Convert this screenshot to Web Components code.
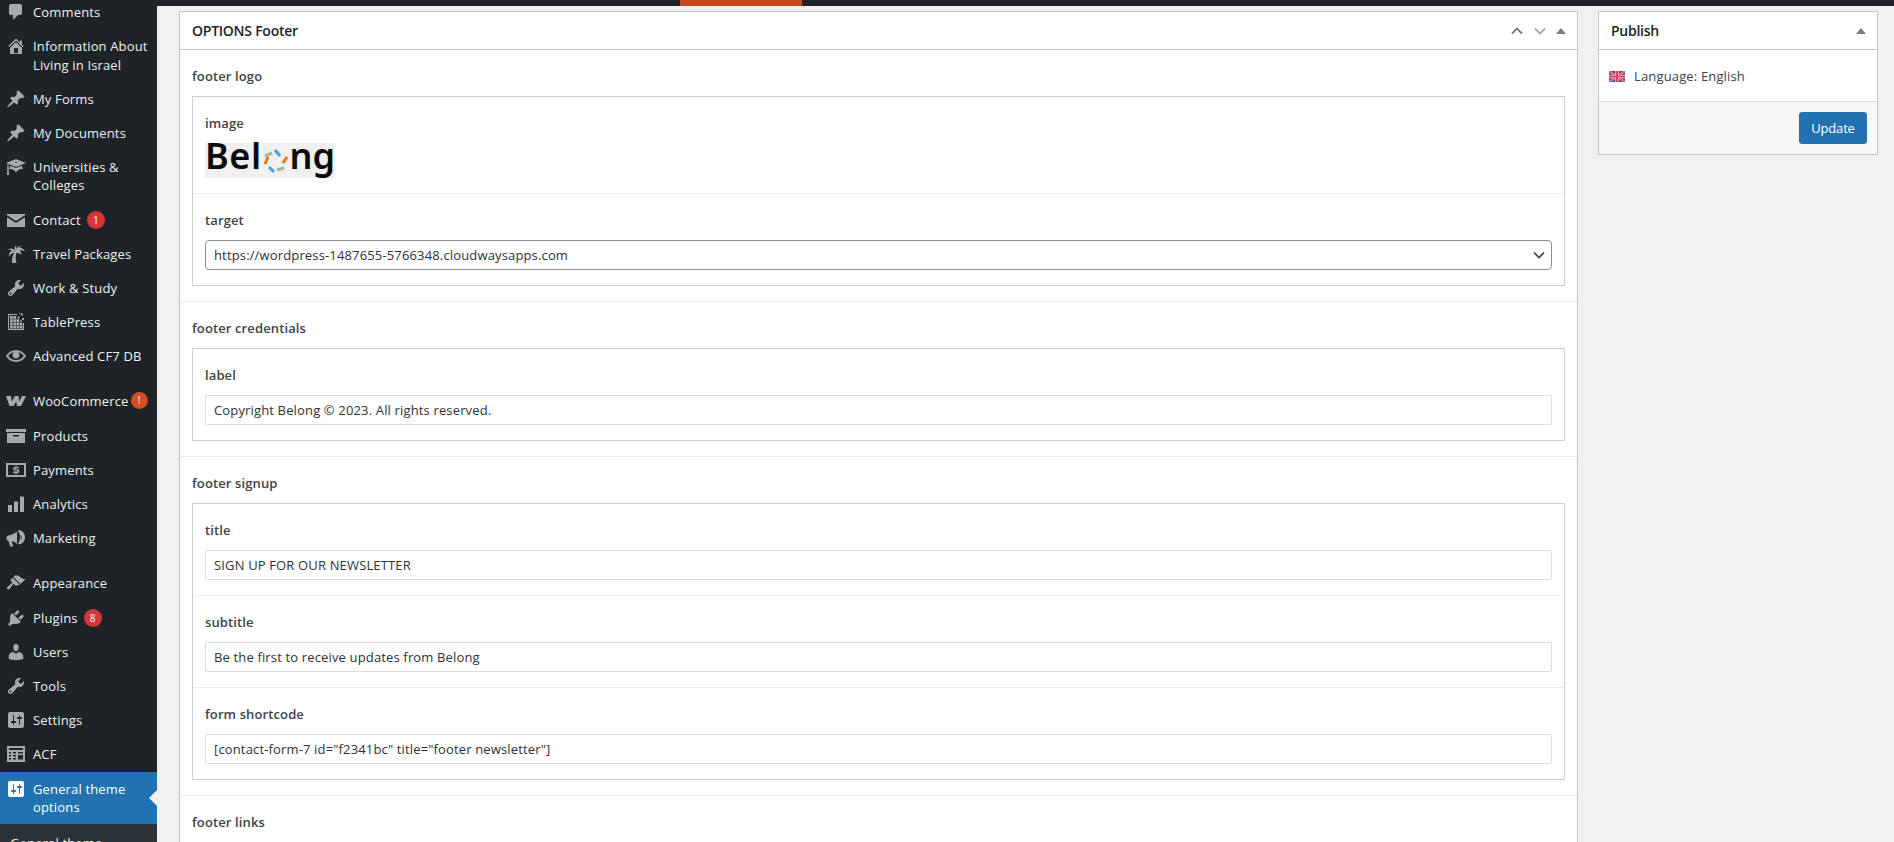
<!DOCTYPE html>
<html lang="en">
<head>
<meta charset="utf-8">
<title>OPTIONS Footer</title>
<style>
html, body { margin: 0; height: 842px; overflow: hidden; background: #f0f0f1; }
body { font: 13px/19px "Open Sans", "Noto Sans", sans-serif; letter-spacing: .15px; color: #3c434a; }
</style>
</head>
<body>
<wp-page>
	<wp-sidebar slot="side">
		<wp-item icon="comment">Comments</wp-item>
		<wp-item icon="home">Information About Living in Israel</wp-item>
		<wp-item icon="pin">My Forms</wp-item>
		<wp-item icon="pin">My Documents</wp-item>
		<wp-item icon="learn" two>Universities &amp; Colleges</wp-item>
		<wp-item icon="mail" badge="1">Contact</wp-item>
		<wp-item icon="palm">Travel Packages</wp-item>
		<wp-item icon="wrench">Work &amp; Study</wp-item>
		<wp-item icon="press">TablePress</wp-item>
		<wp-item icon="eye">Advanced CF7 DB</wp-item>
		<wp-item icon="woo" badge="!" tone="warn" sep>WooCommerce</wp-item>
		<wp-item icon="box">Products</wp-item>
		<wp-item icon="pay">Payments</wp-item>
		<wp-item icon="bars">Analytics</wp-item>
		<wp-item icon="horn">Marketing</wp-item>
		<wp-item icon="brush" sep>Appearance</wp-item>
		<wp-item icon="plug" badge="8">Plugins</wp-item>
		<wp-item icon="user">Users</wp-item>
		<wp-item icon="wrench">Tools</wp-item>
		<wp-item icon="sliders">Settings</wp-item>
		<wp-item icon="acf">ACF</wp-item>
		<wp-item icon="sliders" current two>General theme options</wp-item>
		<wp-subitem>General theme options</wp-subitem>
	</wp-sidebar>

	<wp-postbox slot="main" heading="OPTIONS Footer" arrows>
		<acf-section label="footer logo">
			<acf-row label="image"><belong-logo></belong-logo></acf-row>
			<acf-row label="target"><acf-input select>https://wordpress-1487655-5766348.cloudwaysapps.com</acf-input></acf-row>
		</acf-section>
		<acf-section label="footer credentials">
			<acf-row label="label"><acf-input>Copyright Belong © 2023. All rights reserved.</acf-input></acf-row>
		</acf-section>
		<acf-section label="footer signup">
			<acf-row label="title"><acf-input>SIGN UP FOR OUR NEWSLETTER</acf-input></acf-row>
			<acf-row label="subtitle"><acf-input>Be the first to receive updates from Belong</acf-input></acf-row>
			<acf-row label="form shortcode"><acf-input>[contact-form-7 id="f2341bc" title="footer newsletter"]</acf-input></acf-row>
		</acf-section>
		<acf-section label="footer links"></acf-section>
	</wp-postbox>

	<wp-postbox slot="aside" heading="Publish">
		<publish-body></publish-body>
	</wp-postbox>
</wp-page>

<script>
const ICONS = {
	comment: '<path d="M5 2h9c1.1 0 2 .9 2 2v7c0 1.1-.9 2-2 2h-2l-5 5v-5H5c-1.1 0-2-.9-2-2V4c0-1.1.9-2 2-2z"/>',
	home: '<path d="M16 8.5l1.53 1.53-1.06 1.06L10 4.62l-6.47 6.47-1.06-1.06L10 2.5l4 4v-2h2v4zm-6-2.46l6 5.99V18H4v-6l6-5.96zM12 17v-5H8v5h4z"/>',
	pin: '<path d="M10.44 3.02l1.82-1.82 6.36 6.35-1.83 1.82c-1.05-.68-2.48-.57-3.41.36l-.75.75c-.92.93-1.04 2.35-.35 3.41l-1.83 1.82-2.41-2.41-2.8 2.79c-.42.42-3.38 2.71-3.8 2.29s1.86-3.39 2.28-3.81l2.79-2.79L4.1 9.36l1.83-1.82c1.05.69 2.48.57 3.4-.36l.75-.75c.93-.92 1.05-2.35.36-3.41z"/>',
	learn: '<path d="M10 10L2.54 7.02 3 18H1l.48-11.41L0 6l10-4 10 4zm0-5c-.55 0-1 .22-1 .5s.45.5 1 .5 1-.22 1-.5-.45-.5-1-.5zm0 6l5.57-2.23c.71.94 1.2 2.07 1.36 3.3-.3-.04-.61-.07-.93-.07-2.55 0-4.78 1.37-6 3.41C8.78 13.37 6.55 12 4 12c-.32 0-.63.03-.93.07.16-1.23.65-2.36 1.36-3.3z"/>',
	mail: '<path d="M1 4h18v1.200L10 11 1 5.200z"/><path d="M1 7.200l9 5.800 9-5.800V17H1z"/>',
	palm: '<path d="M8.500 8h2.500C9.500 11 9.300 15 10.500 19H6C5.800 15 6.700 11 8.500 8z"/><path d="M9.500 8.500C8.500 4.500 4.500 3 1.500 6c2-.5 3.500 0 4.500.7C4 7.500 2.500 9.500 3 12.500 4.500 10 7 8.700 9.500 8.500z"/><path d="M9.500 8.500c-.5-3 2.500-7 7-6.500-1.500.3-2.500 1-3 2 2.500-.5 4.500.7 5.500 3.500-2-1.300-4-1.700-5.500-1 1.300 1 2 2.500 1.700 4.500-1.200-1.800-3.200-2.700-5.700-2.500z"/><path d="M9.500 8.500C8 6 8 3.500 10 1.500c.5 2.500 1 4.500-.5 7z"/>',
	wrench: '<path d="M16.68 9.770c-1.340 1.340-3.300 1.670-4.950.99l-5.410 6.520c-.99.99-2.590.99-3.580 0s-.99-2.590 0-3.570l6.520-5.420c-.68-1.650-.35-3.610.99-4.950 1.280-1.280 3.120-1.620 4.720-1.060l-2.890 2.890 2.820 2.820 2.860-2.870c.53 1.580.18 3.390-1.080 4.650zM3.810 16.210c.4.39 1.040.39 1.430 0 .4-.4.4-1.040 0-1.430-.39-.4-1.030-.4-1.430 0-.39.39-.39 1.030 0 1.430z"/>',
	press: '<path d="M2 2h9v1H3v14h14v-6h1v7H2z"/><path d="M4 4h2.800v2.800H4zM7.300 4h2.800v2.800H7.300zM4 7.300h2.800v2.800H4zM7.300 7.300h2.800v2.800H7.300zM10.600 7.300h2.800v2.800h-2.800zM4 10.600h2.800v2.800H4zM7.300 10.600h2.800v2.800H7.300zM10.600 10.600h2.800v2.800h-2.800zM13.900 10.600h2.600v2.800h-2.600zM4 13.900h2.800v2.600H4zM7.300 13.900h2.800v2.600H7.300zM10.600 13.900h2.800v2.600h-2.800zM13.900 13.900h2.600v2.600h-2.600zM11.500 4.500h2v2h-2zM15 1.500h2v2h-2zM13 1h1.200v1.200H13zM16 6h2v2h-2zM14.500 8h1.500v1.500h-1.500z"/>',
	eye: '<path d="M19.700 9.400C17.700 6 14 3.900 10 3.900S2.300 6 .3 9.400L0 10l.3.6c2 3.400 5.700 5.500 9.700 5.500s7.700-2.100 9.700-5.500l.3-.6-.3-.6zM10 14.100c-3.100 0-6-1.600-7.700-4.100C3.600 8 5.700 6.600 8 6.100c-.9.6-1.500 1.700-1.500 2.900 0 1.900 1.600 3.500 3.500 3.500s3.500-1.600 3.500-3.500c0-1.200-.6-2.300-1.500-2.900 2.300.5 4.400 1.900 5.700 3.900-1.700 2.500-4.600 4.100-7.700 4.100z"/>',
	woo: '<path d="M0 5h5l.8 5.500L9 5h3.500l.7 5.500L16 5h4l-5 10h-4l-.8-4.500L7.500 15H3.500z"/>',
	box: '<path d="M0 3h20v3H0z"/><path fill-rule="evenodd" d="M1 7h18v10H1zm6 2v1.500h6V9z"/>',
	pay: '<path fill-rule="evenodd" d="M0 3h20v14H0zm2 2v10h16V5z"/><path d="M12.800 6.800H9c-1 0-1.700.7-1.700 1.700v.5c0 1 .7 1.600 1.700 1.600h2.200v1H7.300v1.600h2v1.100h1.500v-1.100h.8c1 0 1.700-.7 1.700-1.700v-.6c0-1-.7-1.600-1.700-1.600H9.400v-1h3.400zM9.300 5.800h1.500v1.400H9.300z"/>',
	bars: '<path d="M2 11h4v7H2zM8 7.500h4V18H8zM14 2.500h4V18h-4z"/>',
	horn: '<path d="M11 3.500C7.500 6 5 7.200 2.500 7.500 1 7.800.5 9 .5 10.300s.7 2.400 2 2.700l1.800 5.500h3L5.600 13.300c2 .3 3.600 1 5.400 2.700z"/><path fill-rule="evenodd" d="M13 2.200c3.300 0 6 3.100 6 7s-2.700 7-6 7c-.5 0-1-.1-1.400-.2C13 14.300 14 12 14 9.200s-1-5.100-2.400-6.800c.4-.1.900-.2 1.400-.2zm1.500 4.600c.7.500 1.100 1.400 1.100 2.400s-.4 1.900-1.100 2.400c.4-1.500.4-3.300 0-4.800z"/>',
	brush: '<path d="M14.480 11.060L7.410 3.990l1.500-1.500c.5-.56 2.300-.47 3.510.32 1.210.8 1.430 1.280 2.910 2.100 1.180.64 2.450 1.260 4.450.85zm-.71.71L6.700 4.700 4.930 6.470c-.39.39-.39 1.020 0 1.410l1.060 1.060c.39.39.39 1.030 0 1.420-.6.6-1.430 1.110-2.210 1.690-.35.26-.7.53-1.010.84C1.430 13.230.4 14.960 1.400 15.960c.99 1 2.730-.04 3.070-1.330.31-.31.58-.66.84-1.010.58-.78 1.090-1.610 1.690-2.210.39-.39 1.020-.39 1.410 0l1.060 1.060c.39.39 1.020.39 1.410 0z"/>',
	plug: '<path d="M13.110 4.360L9.870 7.600 8 5.730l3.240-3.240c.35-.34 1.050-.2 1.560.32.52.51.66 1.210.31 1.550zm-8 1.770l.91-1.120 9.010 9.010-1.190.84c-.71.71-2.630 1.160-3.820 1.160H6.140L4.900 17.260c-.59.59-1.540.59-2.120 0-.59-.58-.59-1.530 0-2.120l1.240-1.240v-3.880c0-1.130.4-3.190 1.090-3.890zm7.260 3.970l3.240-3.240c.34-.35 1.040-.21 1.550.31.52.51.66 1.210.31 1.550l-3.240 3.250z"/>',
	user: '<path d="M10 9.250c-2.270 0-2.730-3.440-2.730-3.440C7 4.020 7.820 2 9.970 2c2.160 0 2.980 2.020 2.710 3.810 0 0-.41 3.440-2.680 3.440zm0 2.570L12.720 10c2.390 0 4.520 2.330 4.520 4.530v2.490s-3.650 1.130-7.240 1.130c-3.650 0-7.240-1.130-7.240-1.130v-2.490c0-2.250 1.940-4.480 4.470-4.480z"/>',
	sliders: '<path d="M18 16V4c0-1.100-.9-2-2-2H4c-1.100 0-2 .9-2 2v12c0 1.100.9 2 2 2h12c1.100 0 2-.9 2-2zM8 11h1c.55 0 1 .45 1 1s-.45 1-1 1H8v1.500c0 .28-.22.5-.5.5s-.5-.22-.5-.5V13H6c-.55 0-1-.45-1-1s.45-1 1-1h1V5.500c0-.28.22-.5.5-.5s.5.22.5.5V11zm5-2h-1c-.55 0-1-.45-1-1s.45-1 1-1h1V5.500c0-.28.22-.5.5-.5s.5.22.5.5V7h1c.55 0 1 .45 1 1s-.45 1-1 1h-1v5.500c0 .28-.22.5-.5.5s-.5-.22-.5-.5V9z"/>',
	acf: '<path fill-rule="evenodd" d="M1 2h18v16H1zm2 2v2h14V4zm0 4v1.500h2V8zm4 0v1.500h3V8zm5 0v1.500h5V8zM3 11v1.500h2V11zm4 0v1.500h3V11zm5 0v4.500h5V11zM3 14v1.500h2V14zm4 0v1.500h3V14z"/>'
}

class WpPage extends HTMLElement {
	constructor() {
		super()
		this.attachShadow({mode: "open"})
	}
	connectedCallback() {
		this.shadowRoot.innerHTML = `
		<style>
		:host { display: flex; height: 842px; overflow: hidden; }
		.side { flex: 0 0 157px; background: #1d2327; overflow: hidden; }
		.col { flex: 1; min-width: 0; display: flex; flex-direction: column; }
		.bar { flex: 0 0 6px; background: #1d2327; padding-left: 523px; }
		.bar i { display: block; width: 122px; height: 6px; background: #ca4a1f; }
		.grid {
			display: grid;
			grid-template-columns: 1fr 280px;
			column-gap: 20px;
			align-items: start;
			padding: 5px 16px 0 22px;
		}
		</style>
		<div class="side"><slot name="side"></slot></div>
		<div class="col">
			<div class="bar"><i></i></div>
			<div class="grid">
				<slot name="main"></slot>
				<slot name="aside"></slot>
			</div>
		</div>
		`
	}
}

class WpSidebar extends HTMLElement {
	constructor() {
		super()
		this.attachShadow({mode: "open"})
	}
	connectedCallback() {
		this.shadowRoot.innerHTML = `
		<style>
		:host { display: block; margin-top: -5px; font-size: 13px; }
		</style>
		<slot></slot>
		`
	}
}

class WpItem extends HTMLElement {
	constructor() {
		super()
		this.attachShadow({mode: "open"})
	}
	connectedCallback() {
		const badge = this.getAttribute('badge')
		const icon = ICONS[this.getAttribute('icon')] || ''
		this.shadowRoot.innerHTML = `
		<style>
		:host {
			display: flex;
			position: relative;
			padding: 7.5px 8px 7.5px 6px;
			color: #f0f0f1;
		}
		:host([two]) { line-height: 18px; padding-top: 8px; padding-bottom: 9px; }
		:host([sep]) { margin-top: 11px; padding-bottom: 8.5px; }
		:host([current]) { background: #2271b1; color: #fff; margin-top: 1px; padding-bottom: 8px; }
		:host([current])::after {
			content: '';
			position: absolute;
			right: 0;
			top: 50%;
			margin-top: -8px;
			border: 8px solid transparent;
			border-right-color: #f0f0f1;
			border-left-width: 0;
		}
		svg { flex: 0 0 20px; width: 20px; height: 20px; fill: #a7aaad; margin-right: 7px; margin-top: -1px; }
		:host([current]) svg { fill: #fff; }
		.label { min-width: 0; }
		.badge {
			display: inline-block;
			width: 18px;
			height: 18px;
			line-height: 18px;
			margin-left: 6px;
			border-radius: 50%;
			background: #d63638;
			color: #fff;
			font-size: 10px;
			letter-spacing: 0;
			text-align: center;
			vertical-align: top;
		}
		:host([tone=warn]) .badge { background: #d54e21; margin-left: 2px; width: 17px; height: 17px; line-height: 17px; }
		</style>
		<svg viewBox="0 0 20 20" aria-hidden="true">${icon}</svg>
		<div class="label"><slot></slot>${badge ? `<span class="badge">${badge}</span>` : ''}</div>
		`
	}
}

class WpSubitem extends HTMLElement {
	constructor() {
		super()
		this.attachShadow({mode: "open"})
	}
	connectedCallback() {
		this.shadowRoot.innerHTML = `
		<style>
		:host {
			display: block;
			background: #2c3338;
			color: #f0f0f1;
			padding: 9.5px 8px 10px 10px;
			font-size: 13px;
		}
		</style>
		<slot></slot>
		`
	}
}

class WpPostbox extends HTMLElement {
	constructor() {
		super()
		this.attachShadow({mode: "open"})
	}
	connectedCallback() {
		const arrows = this.hasAttribute('arrows') ? `
			<svg width="12" height="8" viewBox="0 0 12 8"><path d="M1 6.500l5-5 5 5" fill="none" stroke="#787c82" stroke-width="1.800"/></svg>
			<svg width="12" height="8" viewBox="0 0 12 8"><path d="M1 1.500l5 5 5-5" fill="none" stroke="#a7aaad" stroke-width="1.800"/></svg>
		` : ''
		this.shadowRoot.innerHTML = `
		<style>
		:host { display: block; background: #fff; border: 1px solid #c3c4c7; box-sizing: border-box; }
		header {
			display: flex;
			align-items: center;
			height: 37px;
			padding: 0 11px 0 12px;
			border-bottom: 1px solid #c3c4c7;
			color: #1d2327;
			font-size: 14px;
			font-weight: 600;
			letter-spacing: -.25px;
		}
		h2 { flex: 1; margin: 0; font: inherit; }
		.tools { display: flex; align-items: center; gap: 11px; }
		.tri { width: 0; height: 0; border: 5px solid transparent; border-top: 0; border-bottom: 6px solid #787c82; margin-left: -1px; }
		</style>
		<header>
			<h2>${this.getAttribute('heading')}</h2>
			<div class="tools">${arrows}<span class="tri"></span></div>
		</header>
		<slot></slot>
		`
	}
}

class AcfSection extends HTMLElement {
	constructor() {
		super()
		this.attachShadow({mode: "open"})
	}
	connectedCallback() {
		this.shadowRoot.innerHTML = `
		<style>
		:host { display: block; padding: 15px 12px; border-top: 1px solid #eee; }
		:host(:first-child) { border-top: 0; }
		.name { font-weight: 600; line-height: 22px; margin-bottom: 9px; color: #3c434a; letter-spacing: .12px; }
		.box { border: 1px solid #ccd0d4; }
		</style>
		<div class="name">${this.getAttribute('label')}</div>
		<div class="box"><slot></slot></div>
		`
	}
}

class AcfRow extends HTMLElement {
	constructor() {
		super()
		this.attachShadow({mode: "open"})
	}
	connectedCallback() {
		this.shadowRoot.innerHTML = `
		<style>
		:host { display: block; padding: 15px 12px; border-top: 1px solid #eee; }
		:host(:first-child) { border-top: 0; }
		.name { font-weight: 600; line-height: 22px; margin-bottom: 9px; color: #3c434a; letter-spacing: .12px; }
		</style>
		<div class="name">${this.getAttribute('label')}</div>
		<slot></slot>
		`
	}
}

class AcfInput extends HTMLElement {
	constructor() {
		super()
		this.attachShadow({mode: "open"})
	}
	connectedCallback() {
		const chevron = this.hasAttribute('select')
			? '<svg width="12" height="8" viewBox="0 0 12 8"><path d="M1 1.500l5 5 5-5" fill="none" stroke="#3c434a" stroke-width="1.700"/></svg>'
			: ''
		this.shadowRoot.innerHTML = `
		<style>
		:host {
			display: flex;
			align-items: center;
			justify-content: space-between;
			height: 30px;
			box-sizing: border-box;
			padding: 0 6px 0 8px;
			background: #fff;
			border: 1px solid #ddd;
			border-radius: 2px;
			color: #2c3338;
		}
		:host([select]) { border-color: #8c8f94; border-radius: 4px; }
		</style>
		<span><slot></slot></span>${chevron}
		`
	}
}

class BelongLogo extends HTMLElement {
	constructor() {
		super()
		this.attachShadow({mode: "open"})
	}
	connectedCallback() {
		this.shadowRoot.innerHTML = `
		<style>
		:host {
			display: flex;
			width: 130px;
			height: 35px;
			align-items: flex-start;
			background: #f0f0f0;
			color: #0a0a0a;
			font: 600 36px/26px "Noto Sans", sans-serif;
			letter-spacing: 0;
		}
		.bel { width: 60px; letter-spacing: .6px; }
		svg { flex: 0 0 26px; margin-top: 5px; }
		</style>
		<span class="bel">Bel</span>
		<svg width="26" height="26" viewBox="0 0 26 26" fill="none" stroke-width="3">
			<path d="M5 9l-3 7M24 9l-4 6" stroke="#e07b00"/>
			<path d="M2 8l7-3M21 20l-7 2" stroke="#9dba94"/>
			<path d="M12 2l5 6M6 19l5 5" stroke="#4f9fe0"/>
		</svg>
		<span>ng</span>
		`
	}
}

class PublishBody extends HTMLElement {
	constructor() {
		super()
		this.attachShadow({mode: "open"})
	}
	connectedCallback() {
		this.shadowRoot.innerHTML = `
		<style>
		:host { display: block; }
		.lang { display: flex; align-items: center; gap: 9px; height: 49px; padding: 2px 0 0 10px; border-bottom: 1px solid #dcdcde; color: #3c434a; }
		.foot { display: flex; justify-content: flex-end; padding: 10px; background: #f6f7f7; }
		button {
			width: 68px;
			height: 32px;
			border: 1px solid #2271b1;
			border-radius: 3px;
			background: #2271b1;
			color: #fff;
			font: inherit;
			letter-spacing: -.2px;
			padding: 0;
		}
		</style>
		<div class="lang">
			<svg width="16" height="11" viewBox="0 0 16 11">
				<rect width="16" height="11" fill="#3b4f9c"/>
				<path d="M0 0l16 11M16 0L0 11" stroke="#f4a0ad" stroke-width="2"/>
				<path d="M0 0l16 11M16 0L0 11" stroke="#e8405f" stroke-width="1"/>
				<path d="M8 0v11M0 5.500h16" stroke="#fbd0d6" stroke-width="3.500"/>
				<path d="M8 0v11M0 5.500h16" stroke="#e8405f" stroke-width="2.200"/>
			</svg>
			<span>Language: English</span>
		</div>
		<div class="foot"><button type="button">Update</button></div>
		`
	}
}

customElements.define('wp-page', WpPage)
customElements.define('wp-sidebar', WpSidebar)
customElements.define('wp-item', WpItem)
customElements.define('wp-subitem', WpSubitem)
customElements.define('wp-postbox', WpPostbox)
customElements.define('acf-section', AcfSection)
customElements.define('acf-row', AcfRow)
customElements.define('acf-input', AcfInput)
customElements.define('belong-logo', BelongLogo)
customElements.define('publish-body', PublishBody)
</script>
</body>
</html>
